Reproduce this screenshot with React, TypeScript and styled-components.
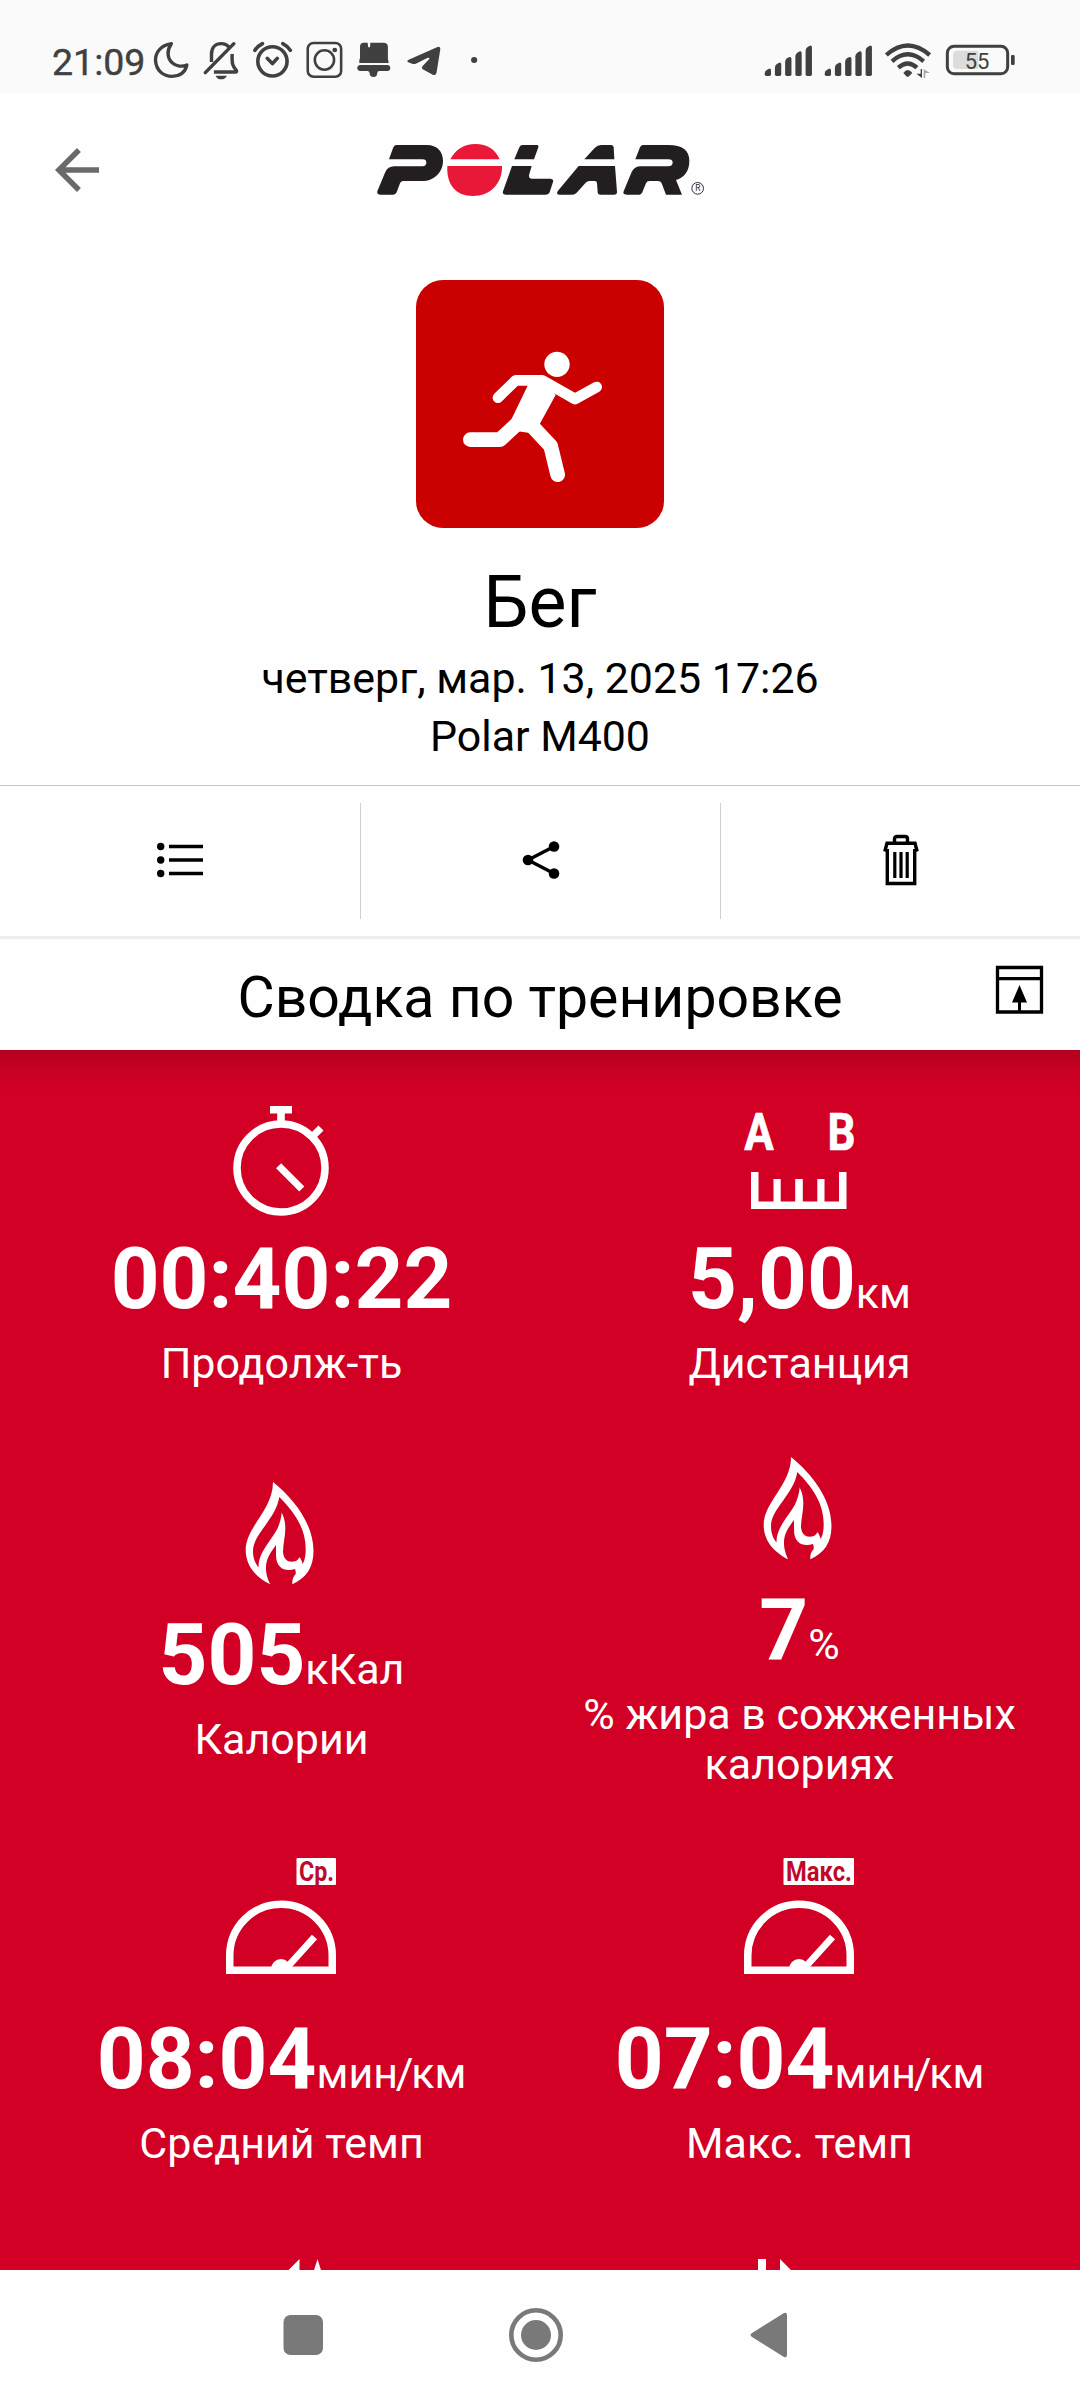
import React from 'react';
import styled, { createGlobalStyle } from 'styled-components';

const INK = '#404040';
const RED = '#d10024';

const GlobalStyle = createGlobalStyle`
  * { box-sizing: border-box; }
  body { margin: 0; background: #fff; }
  svg { display: block; flex: none; overflow: visible; }
`;

const Screen = styled.div`
  width: 1080px;
  height: 2400px;
  display: flex;
  flex-direction: column;
  overflow: hidden;
  background: #fefefe;
  color: #000;
  font-family: Roboto, 'Noto Sans', sans-serif;
`;

const StatusBar = styled.div`
  height: 93px;
  flex: none;
  padding: 20px 60px 0 52px;
  display: flex;
  justify-content: space-between;
  background: #fafafa;
  color: ${INK};
`;

const StatusGroup = styled.div`
  display: flex;
`;

const Clock = styled.span`
  width: 97.8px;
  flex: none;
  font-size: 37.5px;
  line-height: 43px;
  padding-top: 21px;
  -webkit-text-stroke: 0.4px ${INK};
`;

const Header = styled.header`
  height: 154px;
  flex: none;
  display: grid;
  grid-template-columns: 360px 360px 360px;
  align-items: center;
`;

const BackButton = styled.button`
  border: 0;
  background: none;
  padding: 0;
  margin-left: 44px;
  width: 66px;
  height: 66px;
`;

const Hero = styled.section`
  flex: none;
  display: flex;
  flex-direction: column;
  align-items: center;
  padding: 33px 0 20px;
`;

const SportTile = styled.div`
  width: 248px;
  height: 248px;
  border-radius: 27px;
  overflow: hidden;
  background: #cb0000;
`;

const SportName = styled.h1`
  margin: 34px 0 5px;
  font-size: 71.5px;
  line-height: 82px;
  font-weight: 400;
`;

const HeroLine = styled.p`
  margin: 0;
  font-size: 42.9px;
  line-height: 58px;
`;

const Actions = styled.div`
  height: 154px;
  flex: none;
  padding: 17px 0;
  display: grid;
  grid-template-columns: repeat(3, 1fr);
  border-top: 1px solid #c8c8c8;
  border-bottom: 3px solid #eeeeee;
`;

const Action = styled.button`
  border: 0;
  background: none;
  padding: 0 0 2px;
  display: flex;
  align-items: center;
  justify-content: center;
  & + & { border-left: 1px solid #cfcfcf; }
`;

const SectionBar = styled.div`
  height: 111px;
  flex: none;
  display: grid;
  grid-template-columns: 1fr 604px 1fr;
  padding: 0 37px;
`;

const SectionTitle = styled.h2`
  grid-column: 2;
  margin: 25px 0 0;
  font-size: 57.2px;
  line-height: 68px;
  font-weight: 400;
  display: flex;
  justify-content: center;
  white-space: nowrap;
`;

const PinButton = styled.button`
  border: 0;
  background: none;
  padding: 0;
  margin-top: 27px;
  height: 47px;
  justify-self: end;
`;

const Summary = styled.main`
  height: 1220px;
  flex: none;
  overflow: hidden;
  padding: 56px 22px 0;
  display: grid;
  grid-template-columns: 518px 518px;
  grid-auto-rows: max-content;
  row-gap: 69px;
  align-items: center;
  color: #fff;
  background: linear-gradient(#b40020 0, #c20022 12px, #cc0023 26px, ${RED} 42px);
`;

const Metric = styled.div`
  display: flex;
  flex-direction: column;
  align-items: center;
`;

const IconSlot = styled.div<{ $h: number }>`
  height: ${(p) => p.$h}px;
`;

const ValueRow = styled.div`
  margin-top: 13px;
  padding-left: 1px;
  height: 100px;
  display: flex;
  align-items: baseline;
`;

const Value = styled.span`
  font-size: 85.3px;
  line-height: 100px;
  font-weight: 700;
`;

const Unit = styled.span`
  font-size: 43px;
  line-height: 50px;
`;

const Slash = styled.span`
  margin: 0 -2.3px;
`;

const Label = styled.div`
  margin-top: 9px;
  padding-left: 1px;
  font-size: 43px;
  line-height: 50px;
  text-align: center;
`;

const NavBar = styled.nav`
  flex: 1;
  display: flex;
  align-items: flex-start;
  padding: 38px 0 0 276px;
  gap: 179px;
  background: #fefefe;
`;

/* Status icons share one canvas and are laid edge to edge; unit is the number of canvas units per pixel across. */
const Slice = ({ x, w, unit = 2.904, children }: { x: number; w: number; unit?: number; children: React.ReactNode }) => (
  <svg width={w / unit} height={73} viewBox={`${x} 0 ${w} 219`} preserveAspectRatio="none" fill={INK}>
    {children}
  </svg>
);

const Signal = ({ x, w, at }: { x: number; w: number; at: number }) => (
  <Slice x={x} w={w} unit={3}>
    {[22, 40, 57, 74, 91].map((h, i) => {
      const l = at + i * 30.7;
      const top = 168 - h;
      return (
        <path
          key={h}
          d={`M${l} ${top + 15} Q${l} ${top + 8} ${l + 6} ${top + 4} L${l + 13} ${top} Q${l + 19} ${top - 1} ${l + 19} ${top + 5} V163 Q${l + 19} 168 ${l + 14} 168 H${l + 5} Q${l} 168 ${l} 163 Z`}
        />
      );
    })}
  </Slice>
);

const StatusLeftIcons = () => (
  <>
    <Slice x={435} w={135}>
      <path d="M497 71 C466 76 450 98 451 122 C453 151 473 169 499 169 C523 168 538 155 542 135 C529 141 511 140 499 128 C483 112 485 88 497 71 Z" fill="none" stroke={INK} strokeWidth="10" strokeLinejoin="round" />
    </Slice>
    <Slice x={570} w={150}>
      <path d="M615 126 V103 C615 82 627 71 643 71 C653 71 661 75 666 82" fill="none" stroke={INK} strokeWidth="10" />
      <path d="M675 102 C674 130 676 139 687 151 Q690 156 684 156 H622" fill="none" stroke={INK} strokeWidth="10" />
      <path d="M597 158 L680 71" fill="none" stroke={INK} strokeWidth="10" strokeLinecap="round" />
      <path d="M627 167 H660 Q655 178 643 178 Q631 178 627 167 Z" />
    </Slice>
    <Slice x={720} w={150}>
      <g fill="none" stroke={INK} strokeWidth="10.500" strokeLinecap="round" strokeLinejoin="round">
        <ellipse cx="791" cy="124" rx="42.500" ry="44" />
        <path d="M740 91 Q747 79 762 71 M843 91 Q836 79 821 71" />
        <path d="M776 115 L791 131 L805 115" />
      </g>
    </Slice>
    <Slice x={870} w={145}>
      <rect x="892.500" y="69" width="97" height="101" rx="17" fill="none" stroke={INK} strokeWidth="7.500" />
      <ellipse cx="941" cy="120" rx="28" ry="29" fill="none" stroke={INK} strokeWidth="7.500" />
      <circle cx="971" cy="90" r="7" />
    </Slice>
    <Slice x={1015} w={145}>
      <path d="M1058 68 H1069 L1071 82 H1076 L1077 68 H1115 Q1128 68 1128 80 V118 Q1130 121 1130 129 H1045 V120 L1047 114 V80 Q1047 68 1058 68 Z" />
      <path d="M1048 135 H1126 Q1135 136 1135 144 Q1135 153 1126 153 H1102 Q1097 154 1097 160 Q1097 171 1086 171 Q1075 171 1075 160 Q1075 154 1069 153 H1048 Q1039 152 1039 144 Q1039 136 1048 135 Z" />
    </Slice>
    <Slice x={1160} w={140}>
      <path d="M1188 119 L1272 81 Q1281 78 1280 88 L1269 158 Q1267 168 1258 164 L1229 148 Q1224 144 1228 139 L1248 117 Q1249 111 1242 114 L1209 131 Q1204 133 1198 131 L1187 127 Q1181 123 1188 119 Z" />
    </Slice>
    <Slice x={1300} w={100}>
      <circle cx="1376" cy="120" r="9" />
    </Slice>
  </>
);

const StatusRightIcons = () => (
  <>
    <Signal x={120} w={180} at={134} />
    <Signal x={300} w={180} at={314} />
    <Slice x={480} w={180} unit={3}>
      <g fill="none" stroke={INK} strokeWidth="13">
        <path d="M499 105 Q563 48 629 105" />
        <path d="M516 124 Q563 82 611 124" />
        <path d="M535 143 Q563 118 591 143" />
      </g>
      <path d="M550 159 Q563 141 577 159 L567 169 Q563 172 559 169 Z" />
      <path d="M602 147 H606 V174 L589 161 H602 Z" />
      <path d="M616 174 H611 V147 L630 159 H616 Z" fill="#a9a9a9" />
    </Slice>
    <Slice x={660} w={240} unit={3}>
      <rect x="682" y="79" width="181" height="82" rx="20" fill="none" stroke={INK} strokeWidth="9" />
      <path d="M712 92 H775 V147 H712 Q699 147 699 134 V105 Q699 92 712 92 Z" fill="#dcdcdc" />
      <rect x="873" y="105" width="11" height="30" rx="4" />
      <text x="771" y="147" textAnchor="middle" fontSize="66" fontFamily="Roboto, sans-serif">55</text>
    </Slice>
  </>
);

const PolarLogo = () => (
  <svg width="360" height="80" viewBox="0 0 1080 240" fill="#231f20">
    <path d="M87 88 L100 52 Q103 45 110 45 H200 C232 45 249 65 249 92 C249 125 225 153 185 153 H130 Q123 153 120 160 L110 187 Q107 194 100 194 H60 Q50 194 52 184 L75 128 Q83 109 103 109 H188 Q199 107 199 98 Q199 88 188 88 Z" />
    <path d="M271 88 C287 58 312 42 346 42 C382 42 406 58 419 88 Z M262 108 H426 C428 158 393 198 338 198 C288 198 259 164 262 108 Z" fill="#e91838" />
    <path d="M463 88 L478 52 Q481 45 488 45 H530 Q537 45 535 52 L522 88 Z M456 108 H515 L508 132 Q504 146 516 146 H572 Q582 147 579 156 L569 187 Q566 194 558 194 H438 Q426 194 429 184 Z" />
    <path d="M673 88 L704 54 Q712 45 724 45 H753 Q760 45 761 52 L763 88 Z M656 108 H765 L771 186 Q771 194 762 194 H722 Q713 194 713 186 L711 160 Q711 153 704 153 H688 Q681 153 677 158 L650 188 Q645 194 636 194 H600 Q586 194 594 182 Z" />
    <path d="M826 88 L840 52 Q843 45 850 45 H925 C968 45 988 62 988 92 C988 125 972 142 948 150 L966 194 H918 L905 160 Q902 153 894 153 H868 Q861 153 858 160 L847 187 Q844 194 838 194 H800 Q787 194 791 184 L815 126 Q823 109 842 109 H925 Q938 107 938 98 Q938 88 925 88 Z" />
    <circle cx="1013" cy="175" r="17.500" fill="none" stroke="#231f20" strokeWidth="2.800" />
    <text x="1013.500" y="184" textAnchor="middle" fontSize="25" fontFamily="Roboto, sans-serif">R</text>
  </svg>
);

const Runner = () => (
  <svg width="248" height="248" viewBox="48 30 744 744" fill="#fff" stroke="#fff" strokeLinecap="round" strokeLinejoin="round">
    <circle cx="471" cy="283" r="38" stroke="none" />
    <path d="M294 383 L347 331 H427 L525 387 L590 351" fill="none" strokeWidth="32" />
    <path d="M211 509 H300 L368 446 M398 470 L452 528 L473 614" fill="none" strokeWidth="44" />
    <path d="M384 345 L430 325 L467 375 L418 464 L385 488 L353 484 L335 446 L342 432 Z" stroke="none" />
  </svg>
);

const Stopwatch = () => (
  <svg width="110" height="110" viewBox="0 0 110 110" fill="#fff">
    <path d="M44 0 H66 V7.500 H58.800 V18 H51.200 V7.500 H44 Z" />
    <g fill="none" stroke="#fff" strokeWidth="7.500">
      <circle cx="55" cy="62" r="44" />
      <path d="M84 33 L95 22 M52.600 59.800 L75.800 83" strokeWidth="7.200" />
    </g>
  </svg>
);

const Distance = () => (
  <svg width="110" height="110" viewBox="0 0 110 110" fill="#fff">
    <g fontSize="51.500" fontWeight="700" fontFamily="Roboto, sans-serif" stroke="#fff" strokeWidth="0.700">
      <text x="0.200" y="44" textLength="29.500" lengthAdjust="spacingAndGlyphs">A</text>
      <text x="83.500" y="44" textLength="28" lengthAdjust="spacingAndGlyphs">B</text>
    </g>
    <path d="M7 66 H14.500 V95.500 H29.500 V73 H36.700 V95.500 H51.200 V73 H58.800 V95.500 H73.300 V73 H80.500 V95.500 H95 V66 H102.500 V103 H7 Z" />
  </svg>
);

const Flame = () => (
  <svg width="110" height="110" viewBox="0 0 110 110" fill="#fff">
    <path
      fillRule="evenodd"
      d="M47 0 C68 17 87.500 42 87.500 69 C87.500 86 80 96 66.300 102.300 C66 98 67 95 69.700 92 C70 90 69.500 89 69 87 C60 90 50 87 50 73 V63 C44 71 40 77 40 86 C40 93 42 97 44 102.300 C30 95 19.700 84 19.700 68 C19.700 45 47 28 47 0 Z M53.300 15 C50 37 27 52 27 69 C27 76 29 81 32.500 85.500 C32 71 44 60 51 47.500 C53.500 42 55 37 55.700 30.400 C63 45 57 58 57 70 C58 80 64 80.500 70 79 C72 78 73 76 73.300 75 C75 77 76 79 76.700 82 C79 78 79.700 73 79.700 67 C79.700 45 67 29 53.300 15 Z"
    />
  </svg>
);

const Gauge = ({ tag, tagWidth }: { tag: string; tagWidth: number }) => (
  <svg width="110" height="116" viewBox="0 0 110 116" fill="#fff">
    <rect x={110 - tagWidth} y="0" width={tagWidth} height="27" rx="1" />
    <text x={110 - tagWidth + 2.5} y="23.300" fontSize="27" fontWeight="700" fontFamily="Roboto, sans-serif" fill="#bd0a2c" textLength={tagWidth - 4.5} lengthAdjust="spacingAndGlyphs">
      {tag}
    </text>
    <path d="M3.750 112.200 V97.500 A51.250 51.250 0 0 1 106.250 97.500 V112.200 Z" fill="none" stroke="#fff" strokeWidth="7.500" />
    <path d="M45 111 A10 10 0 0 1 65 111 Z" />
    <path d="M60 110.500 L88.500 79" stroke="#fff" strokeWidth="7" />
  </svg>
);

const Ascent = () => (
  <svg width="110" height="110" viewBox="0 0 110 110" fill="#fff">
    <path d="M73.500 22 V58 H38 Z M91.500 22 L107 72 H76 Z" />
  </svg>
);

const Descent = () => (
  <svg width="110" height="110" viewBox="0 0 110 110" fill="#fff">
    <path d="M14 22 H22 V90 H14 Z M36 22 L72 58 H36 Z" />
  </svg>
);

type MetricProps = {
  icon: React.ReactNode;
  iconHeight?: number;
  value: string;
  unit?: React.ReactNode;
  label: string;
};

const MetricCell = ({ icon, iconHeight = 110, value, unit, label }: MetricProps) => (
  <Metric>
    <IconSlot $h={iconHeight}>{icon}</IconSlot>
    <ValueRow>
      <Value>{value}</Value>
      {unit && <Unit>{unit}</Unit>}
    </ValueRow>
    <Label>{label}</Label>
  </Metric>
);

const paceUnit = (
  <>
    мин<Slash>/</Slash>км
  </>
);

export default function App() {
  return (
    <Screen>
      <GlobalStyle />
      <StatusBar>
        <StatusGroup>
          <Clock>21:09</Clock>
          <StatusLeftIcons />
        </StatusGroup>
        <StatusGroup>
          <StatusRightIcons />
        </StatusGroup>
      </StatusBar>

      <Header>
        <BackButton aria-label="Назад">
          <svg width="66" height="66" viewBox="0 0 24 24" fill="#6a6a6a">
            <path d="M20 11H7.830l5.590-5.590L12 4l-8 8 8 8 1.410-1.410L7.830 13H20v-2z" />
          </svg>
        </BackButton>
        <PolarLogo />
      </Header>

      <Hero>
        <SportTile>
          <Runner />
        </SportTile>
        <SportName>Бег</SportName>
        <HeroLine>четверг, мар. 13, 2025 17:26</HeroLine>
        <HeroLine>Polar M400</HeroLine>
      </Hero>

      <Actions>
        <Action aria-label="Список">
          <svg width="46" height="36" viewBox="0 0 46 36">
            <circle cx="3.700" cy="4.500" r="3.700" />
            <circle cx="3.700" cy="18" r="3.700" />
            <circle cx="3.700" cy="31.500" r="3.700" />
            <path d="M12 4.500 H46 M12 18 H46 M12 31.500 H46" stroke="#000" strokeWidth="3.500" />
          </svg>
        </Action>
        <Action aria-label="Поделиться">
          <svg width="38" height="38" viewBox="0 0 38 38">
            <path d="M32 5.500 L6 19 L32 32.500" fill="none" stroke="#000" strokeWidth="3.400" />
            <circle cx="6" cy="19" r="5.300" />
            <circle cx="32" cy="5.500" r="5.300" />
            <circle cx="32" cy="32.500" r="5.300" />
          </svg>
        </Action>
        <Action aria-label="Удалить">
          <svg width="36" height="50" viewBox="0 0 36 50" fill="none" stroke="#000" strokeWidth="3.400">
            <path d="M11.500 8 V4 Q11.500 1.500 14 1.500 H22 Q24.500 1.500 24.500 4 V8" />
            <path d="M1.800 16.500 L4 8.300 H32 L34.200 16.500" />
            <path d="M4.300 14 V48.500 H31.700 V14" />
            <path d="M11.800 17 V43 M18 17 V43 M24.200 17 V43" strokeWidth="3.200" />
          </svg>
        </Action>
      </Actions>

      <SectionBar>
        <SectionTitle>Сводка по тренировке</SectionTitle>
        <PinButton aria-label="Закрепить">
          <svg width="47" height="48" viewBox="0 0 47 48">
            <path d="M1.500 1.500 H45.500 V46 H1.500 Z M1.500 12.700 H45.500" fill="none" stroke="#000" strokeWidth="3.300" />
            <path d="M23.500 19 L31 36.500 H25 V46 H22 V36.500 H16 Z" />
          </svg>
        </PinButton>
      </SectionBar>

      <Summary>
        <MetricCell icon={<Stopwatch />} value="00:40:22" label="Продолж-ть" />
        <MetricCell icon={<Distance />} value="5,00" unit="км" label="Дистанция" />
        <MetricCell icon={<Flame />} value="505" unit="кКал" label="Калории" />
        <MetricCell icon={<Flame />} value="7" unit="%" label="% жира в сожженных калориях" />
        <MetricCell icon={<Gauge tag="Ср." tagWidth={39.5} />} iconHeight={138} value="08:04" unit={paceUnit} label="Средний темп" />
        <MetricCell icon={<Gauge tag="Макс." tagWidth={70.5} />} iconHeight={138} value="07:04" unit={paceUnit} label="Макс. темп" />
        <Metric>
          <Ascent />
        </Metric>
        <Metric>
          <Descent />
        </Metric>
      </Summary>

      <NavBar>
        <svg width="54" height="54" viewBox="0 0 54 54">
          <rect x="7.500" y="7" width="39.500" height="40" rx="7" fill="#797979" />
        </svg>
        <svg width="54" height="54" viewBox="0 0 54 54">
          <circle cx="27" cy="27" r="24.700" fill="none" stroke="#797979" strokeWidth="4.600" />
          <circle cx="27" cy="27" r="15" fill="#797979" />
        </svg>
        <svg width="54" height="54" viewBox="0 0 54 54">
          <path d="M10 25 L42 5 Q45 4 45 7 V47 Q45 50 42 49 L10 29 Q7 27 10 25 Z" fill="#797979" />
        </svg>
      </NavBar>
    </Screen>
  );
}
